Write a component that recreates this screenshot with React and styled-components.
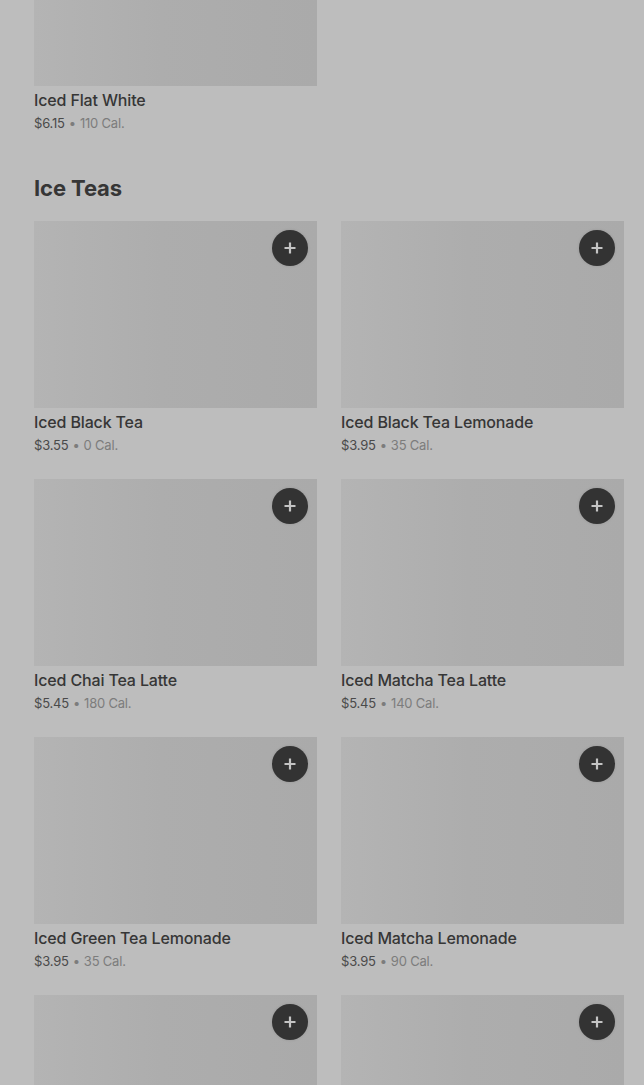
import React from "react";
import styled, { createGlobalStyle } from "styled-components";

const GlobalStyle = createGlobalStyle`
  html, body {
    margin: 0;
    padding: 0;
    background: #bdbdbd;
    font-family: Inter, "Noto Sans", sans-serif;
    overflow: hidden;
  }
`;

const Page = styled.main`
  padding: 0 20px 0 34px;
  margin-top: -101px;
`;

const Section = styled.section`
  display: flex;
  flex-direction: column;
`;

const SectionTitle = styled.h2`
  margin: 40px 0 17px;
  font-size: 22px;
  line-height: 32px;
  font-weight: 700;
  color: #363636;
  letter-spacing: -0.1px;
`;

const Grid = styled.div`
  display: grid;
  grid-template-columns: 283px 283px;
  column-gap: 24px;
  row-gap: 25px;
`;

const Card = styled.div`
  display: flex;
  flex-direction: column;
`;

const Thumb = styled.div`
  position: relative;
  height: 187px;
  background: linear-gradient(90deg, #b4b4b4 0%, #adadad 45%, #aaaaaa 100%);
`;

const AddButton = styled.button`
  position: absolute;
  top: 9px;
  right: 9px;
  width: 36px;
  height: 36px;
  border: none;
  border-radius: 50%;
  background: #333333;
  display: flex;
  align-items: center;
  justify-content: center;
  padding: 0;
  box-shadow: 0 0 3px rgba(0, 0, 0, 0.12);
`;

const Name = styled.div`
  margin-top: 4px;
  font-size: 16px;
  line-height: 20px;
  font-weight: 500;
  color: #363636;
  letter-spacing: -0.15px;
`;

const Meta = styled.div`
  margin-top: 4px;
  font-size: 13px;
  line-height: 18px;
  color: #4a4a4a;
  letter-spacing: -0.2px;
`;

const Dot = styled.span`
  color: #7c7c7c;
  margin: 0 4px;
`;

const Cal = styled.span`
  color: #7c7c7c;
`;

const PlusIcon = () => (
  <svg width="14" height="14" viewBox="0 0 14 14">
    <path d="M7 1.5v11M1.5 7h11" stroke="#c4c4c4" strokeWidth="2.2" />
  </svg>
);

const coffee = [{ name: "Iced Flat White", price: "$6.15", cal: "110 Cal." }];

const teas = [
  { name: "Iced Black Tea", price: "$3.55", cal: "0 Cal." },
  { name: "Iced Black Tea Lemonade", price: "$3.95", cal: "35 Cal." },
  { name: "Iced Chai Tea Latte", price: "$5.45", cal: "180 Cal." },
  { name: "Iced Matcha Tea Latte", price: "$5.45", cal: "140 Cal." },
  { name: "Iced Green Tea Lemonade", price: "$3.95", cal: "35 Cal." },
  { name: "Iced Matcha Lemonade", price: "$3.95", cal: "90 Cal." },
  { name: "Iced Peach Green Tea", price: "$3.95", cal: "60 Cal." },
  { name: "Iced Passion Tango Tea", price: "$3.55", cal: "0 Cal." },
];

function Item({ item, button }) {
  return (
    <Card>
      <Thumb>
        {button && (
          <AddButton aria-label={`Add ${item.name}`}>
            <PlusIcon />
          </AddButton>
        )}
      </Thumb>
      <Name>{item.name}</Name>
      <Meta>
        {item.price}
        <Dot>•</Dot>
        <Cal>{item.cal}</Cal>
      </Meta>
    </Card>
  );
}

export default function App() {
  return (
    <>
      <GlobalStyle />
      <Page>
        <Section>
          <Grid>
            {coffee.map((item, index) => (
              <Item key={index} item={item} />
            ))}
          </Grid>
        </Section>
        <Section>
          <SectionTitle>Ice Teas</SectionTitle>
          <Grid>
            {teas.map((item, index) => (
              <Item key={index} item={item} button />
            ))}
          </Grid>
        </Section>
      </Page>
    </>
  );
}
